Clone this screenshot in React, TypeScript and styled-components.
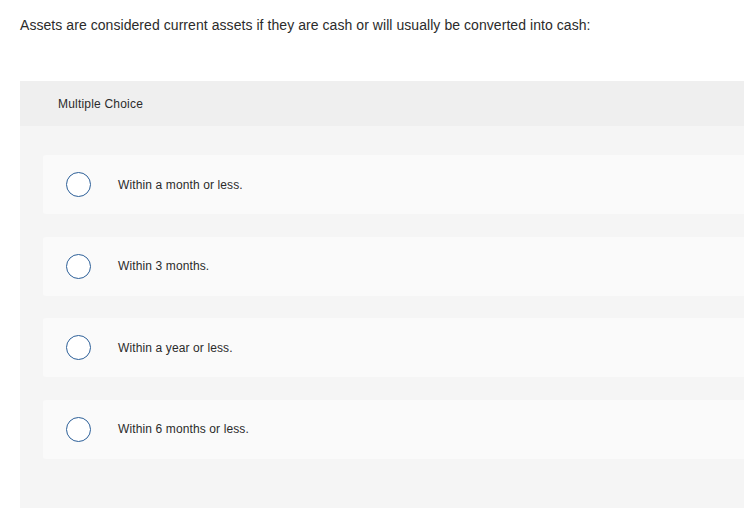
import React, { useState } from "react";
import styled, { createGlobalStyle } from "styled-components";

const GlobalStyle = createGlobalStyle`
  html, body {
    margin: 0;
    padding: 0;
    background: #ffffff;
    overflow: hidden;
  }
  body {
    font-family: "Liberation Sans", Arial, sans-serif;
    color: #2b2b2b;
  }
`;

const Page = styled.div`
  width: 744px;
  height: 511px;
  overflow: hidden;
`;

const Question = styled.p`
  margin: 0;
  padding: 16px 0 0 20px;
  font-size: 14px;
  line-height: 18px;
  letter-spacing: 0.06px;
  color: #2b2b2b;
`;

const Panel = styled.section`
  margin: 47px 0 0 20px;
  background: #f5f5f5;
`;

const PanelHeader = styled.div`
  height: 45px;
  display: flex;
  align-items: center;
  padding-left: 38px;
  background: #efefef;
  font-size: 12px;
  letter-spacing: 0.2px;
  color: #2b2b2b;
`;

const OptionList = styled.div`
  display: flex;
  flex-direction: column;
  gap: 22.67px;
  padding: 29px 0 49px 23px;
`;

const OptionCard = styled.label`
  height: 59px;
  display: flex;
  align-items: center;
  gap: 27px;
  padding-left: 23px;
  background: #fafafa;
  border-radius: 3px 0 0 3px;
  cursor: pointer;
`;

const Radio = styled.span<{ $checked: boolean }>`
  width: 25px;
  height: 25px;
  box-sizing: border-box;
  border-radius: 50%;
  border: 1.5px solid #2c5f98;
  background: ${({ $checked }) => ($checked ? "#2c5f98" : "#ffffff")};
  box-shadow: ${({ $checked }) => ($checked ? "inset 0 0 0 4px #ffffff" : "none")};
  flex-shrink: 0;
`;

const OptionText = styled.span`
  font-size: 12px;
  letter-spacing: 0.12px;
  color: #2b2b2b;
`;

const options = [
  "Within a month or less.",
  "Within 3 months.",
  "Within a year or less.",
  "Within 6 months or less.",
];

const App: React.FC = () => {
  const [selected, setSelected] = useState<number | null>(null);

  return (
    <Page>
      <GlobalStyle />
      <Question>
        Assets are considered current assets if they are cash or will usually be
        converted into cash:
      </Question>
      <Panel>
        <PanelHeader>Multiple Choice</PanelHeader>
        <OptionList>
          {options.map((text, idx) => (
            <OptionCard key={text} onClick={() => setSelected(idx)}>
              <Radio $checked={selected === idx} />
              <OptionText>{text}</OptionText>
            </OptionCard>
          ))}
        </OptionList>
      </Panel>
    </Page>
  );
};

export default App;
